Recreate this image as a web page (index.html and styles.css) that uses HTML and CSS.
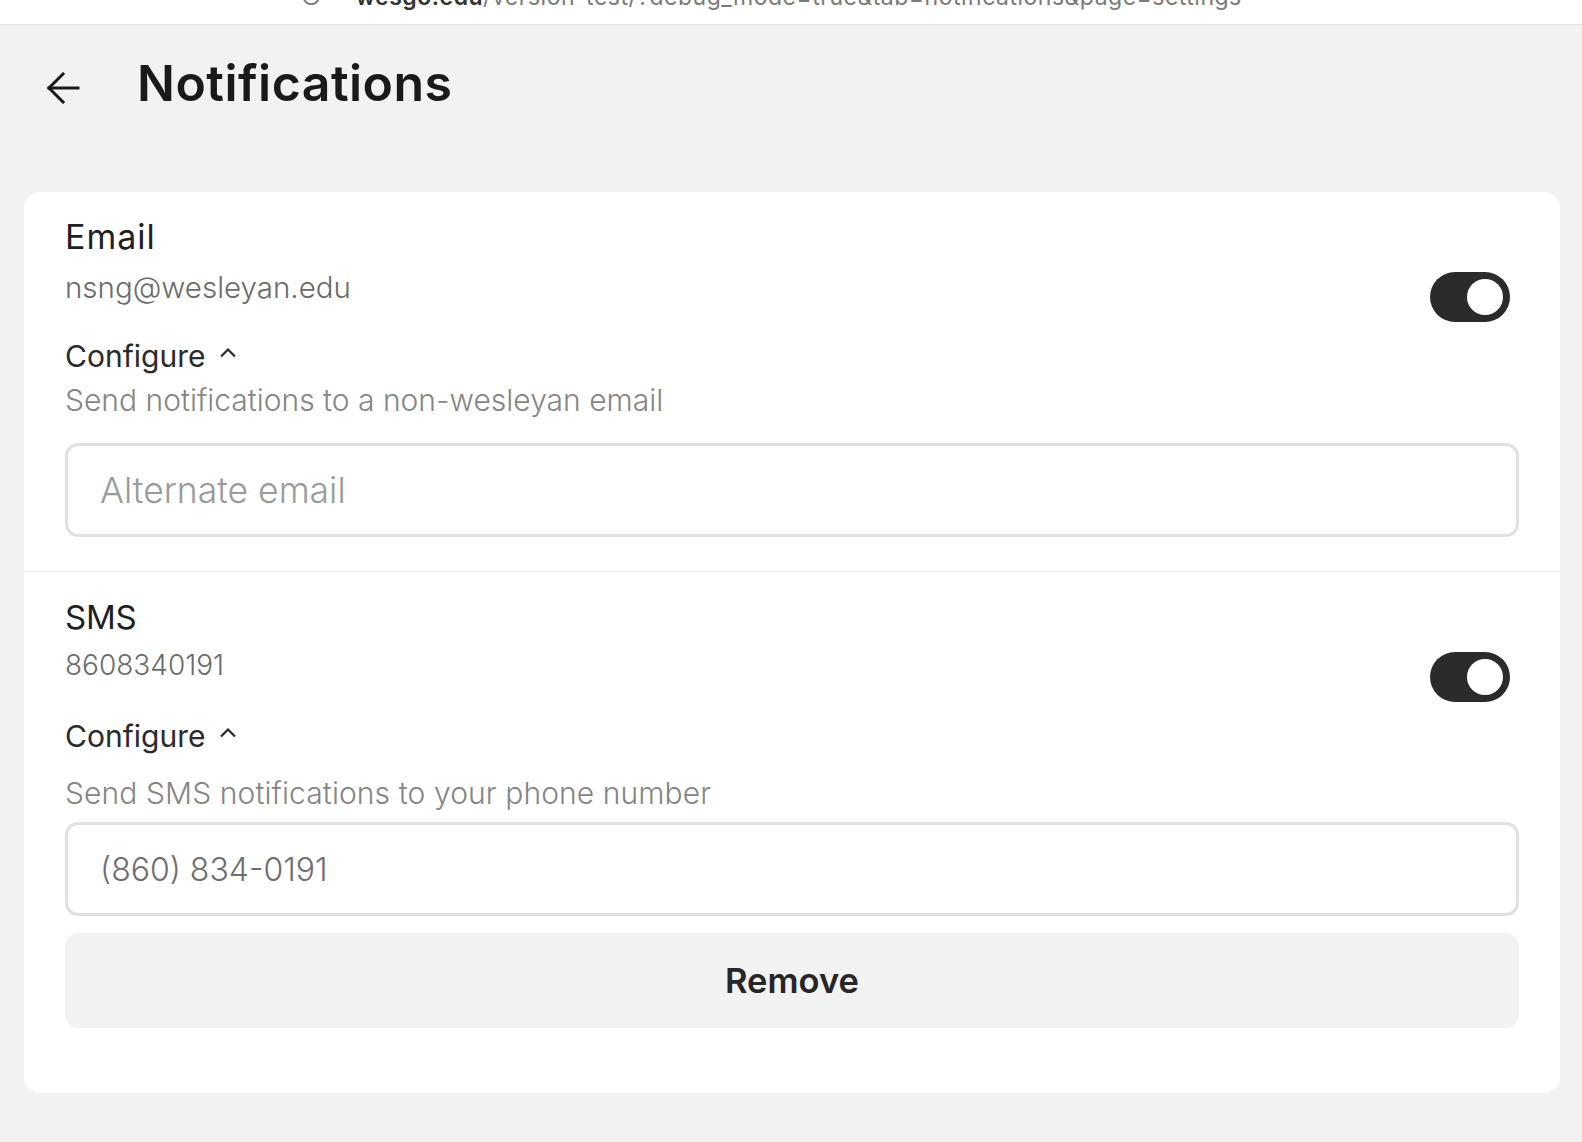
FILE: index.html
```html
<!DOCTYPE html>
<html lang="en">
<head>
<meta charset="utf-8">
<title>Notifications</title>
<link rel="stylesheet" href="styles.css">
</head>
<body>
  <div class="topbar">
    <div class="url"><span class="reload">&#x21bb;</span> <span class="host">wesgo.edu</span>/version-test/?debug_mode=true&amp;tab=notifications&amp;page=settings</div>
  </div>

  <header class="page-header">
    <button class="back" aria-label="Back">
      <svg width="34" height="32" viewBox="0 0 34 32" fill="none" stroke="#1a1a1a" stroke-width="3" stroke-linecap="square">
        <path d="M3 16 H32"/>
        <path d="M17 2 L3 16 L17 30"/>
      </svg>
    </button>
    <h1 class="title">Notifications</h1>
  </header>

  <main class="card">
    <section class="channel channel-email">
      <div class="channel-head">
        <div class="channel-info">
          <div class="channel-label">Email</div>
          <div class="channel-value">nsng@wesleyan.edu</div>
        </div>
        <div class="toggle"><span class="knob"></span></div>
      </div>
      <div class="configure">Configure
        <svg class="caret" width="18" height="11" viewBox="0 0 18 11" fill="none" stroke="#2a2a2a" stroke-width="2.2"><path d="M2 9.5 L9 2.5 L16 9.5"/></svg>
      </div>
      <div class="hint">Send notifications to a non-wesleyan email</div>
      <input class="field field-email" type="text" placeholder="Alternate email">
    </section>

    <section class="channel channel-sms">
      <div class="channel-head">
        <div class="channel-info">
          <div class="channel-label">SMS</div>
          <div class="channel-value">8608340191</div>
        </div>
        <div class="toggle"><span class="knob"></span></div>
      </div>
      <div class="configure">Configure
        <svg class="caret" width="18" height="11" viewBox="0 0 18 11" fill="none" stroke="#2a2a2a" stroke-width="2.2"><path d="M2 9.5 L9 2.5 L16 9.5"/></svg>
      </div>
      <div class="hint">Send SMS notifications to your phone number</div>
      <input class="field field-phone" type="text" placeholder="(860) 834-0191">
      <button class="remove">Remove</button>
    </section>
  </main>
</body>
</html>
```

FILE: styles.css
```css
* { box-sizing: border-box; }

html, body {
  margin: 0;
  padding: 0;
}

body {
  background: #f2f2f2;
  font-family: Inter, "Open Sans", sans-serif;
  color: #1c1c1c;
  width: 1582px;
  height: 1142px;
  overflow: hidden;
}

.topbar {
  height: 25px;
  background: #ffffff;
  border-bottom: 1px solid #e2e2e2;
  overflow: hidden;
  display: flex;
  justify-content: center;
}

.url {
  margin-top: -17px;
  margin-left: -40px;
  font-size: 23px;
  color: #7a7a7a;
  white-space: nowrap;
  letter-spacing: 0.5px;
}

.host {
  color: #333333;
  font-weight: 600;
}

.reload {
  margin-right: 26px;
}

.page-header {
  display: flex;
  align-items: center;
  padding: 29px 0 0 46px;
  height: 86px;
}

.back {
  border: 0;
  background: transparent;
  padding: 0;
  margin: 10px 0 0 0;
  width: 34px;
  height: 32px;
  display: flex;
  cursor: pointer;
}

.title {
  margin: 0 0 0 57px;
  font-size: 50px;
  line-height: 56px;
  font-weight: 600;
  letter-spacing: 0.45px;
  color: #1a1a1a;
}

.card {
  margin: 81px 22px 0 24px;
  background: #ffffff;
  border-radius: 16px;
  display: flex;
  flex-direction: column;
}

.channel {
  padding: 27px 41px 34px 41px;
  display: flex;
  flex-direction: column;
}

.channel-sms {
  border-top: 1px solid #e8ecec;
  padding-bottom: 65px;
}

.channel-head {
  display: flex;
  justify-content: space-between;
  align-items: flex-start;
}

.channel-label {
  font-size: 34px;
  line-height: 36px;
  font-weight: 400;
  color: #1f1f1f;
}

.channel-email .channel-label {
  letter-spacing: 1px;
}

.channel-sms .channel-label {
  font-size: 33px;
  letter-spacing: -0.2px;
}

.channel-value {
  margin-top: 17px;
  font-size: 29.5px;
  line-height: 30px;
  font-weight: 300;
  color: #6b6b6b;
}

.channel-sms .channel-value {
  margin-top: 15px;
  font-size: 28px;
}

.toggle {
  margin-top: 53px;
  margin-right: 9px;
  width: 80px;
  height: 50px;
  border-radius: 25px;
  background: #2b2b2b;
  position: relative;
  flex-shrink: 0;
}

.knob {
  position: absolute;
  right: 7px;
  top: 7px;
  width: 36px;
  height: 36px;
  border-radius: 50%;
  background: #ffffff;
}

.configure {
  margin-top: 19px;
  font-size: 30px;
  line-height: 30px;
  font-weight: 400;
  color: #2a2a2a;
  display: flex;
  align-items: center;
}

.caret {
  margin-left: 14px;
  margin-top: -8px;
}

.hint {
  margin-top: 14px;
  font-size: 30px;
  line-height: 30px;
  font-weight: 300;
  color: #858585;
}

.channel-sms .hint {
  margin-top: 27px;
  letter-spacing: 0.1px;
}

.field {
  margin-top: 28px;
  width: 100%;
  height: 94px;
  border: 3px solid #e1e1e1;
  border-radius: 13px;
  padding: 0 0 0 32px;
  font-family: Inter, "Open Sans", sans-serif;
  font-weight: 300;
  color: #333333;
  background: #ffffff;
  outline: none;
}

.field-email {
  font-size: 35.5px;
}

.field-email::placeholder {
  color: #9a9a9a;
}

.field-phone {
  margin-top: 14px;
  font-size: 32px;
}

.field-phone::placeholder {
  color: #6e6e6e;
}

.remove {
  margin-top: 17px;
  width: 100%;
  height: 95px;
  border: 0;
  border-radius: 14px;
  background: #f2f2f2;
  font-family: Inter, "Open Sans", sans-serif;
  font-size: 34.5px;
  font-weight: 600;
  color: #262626;
  cursor: pointer;
}
```
